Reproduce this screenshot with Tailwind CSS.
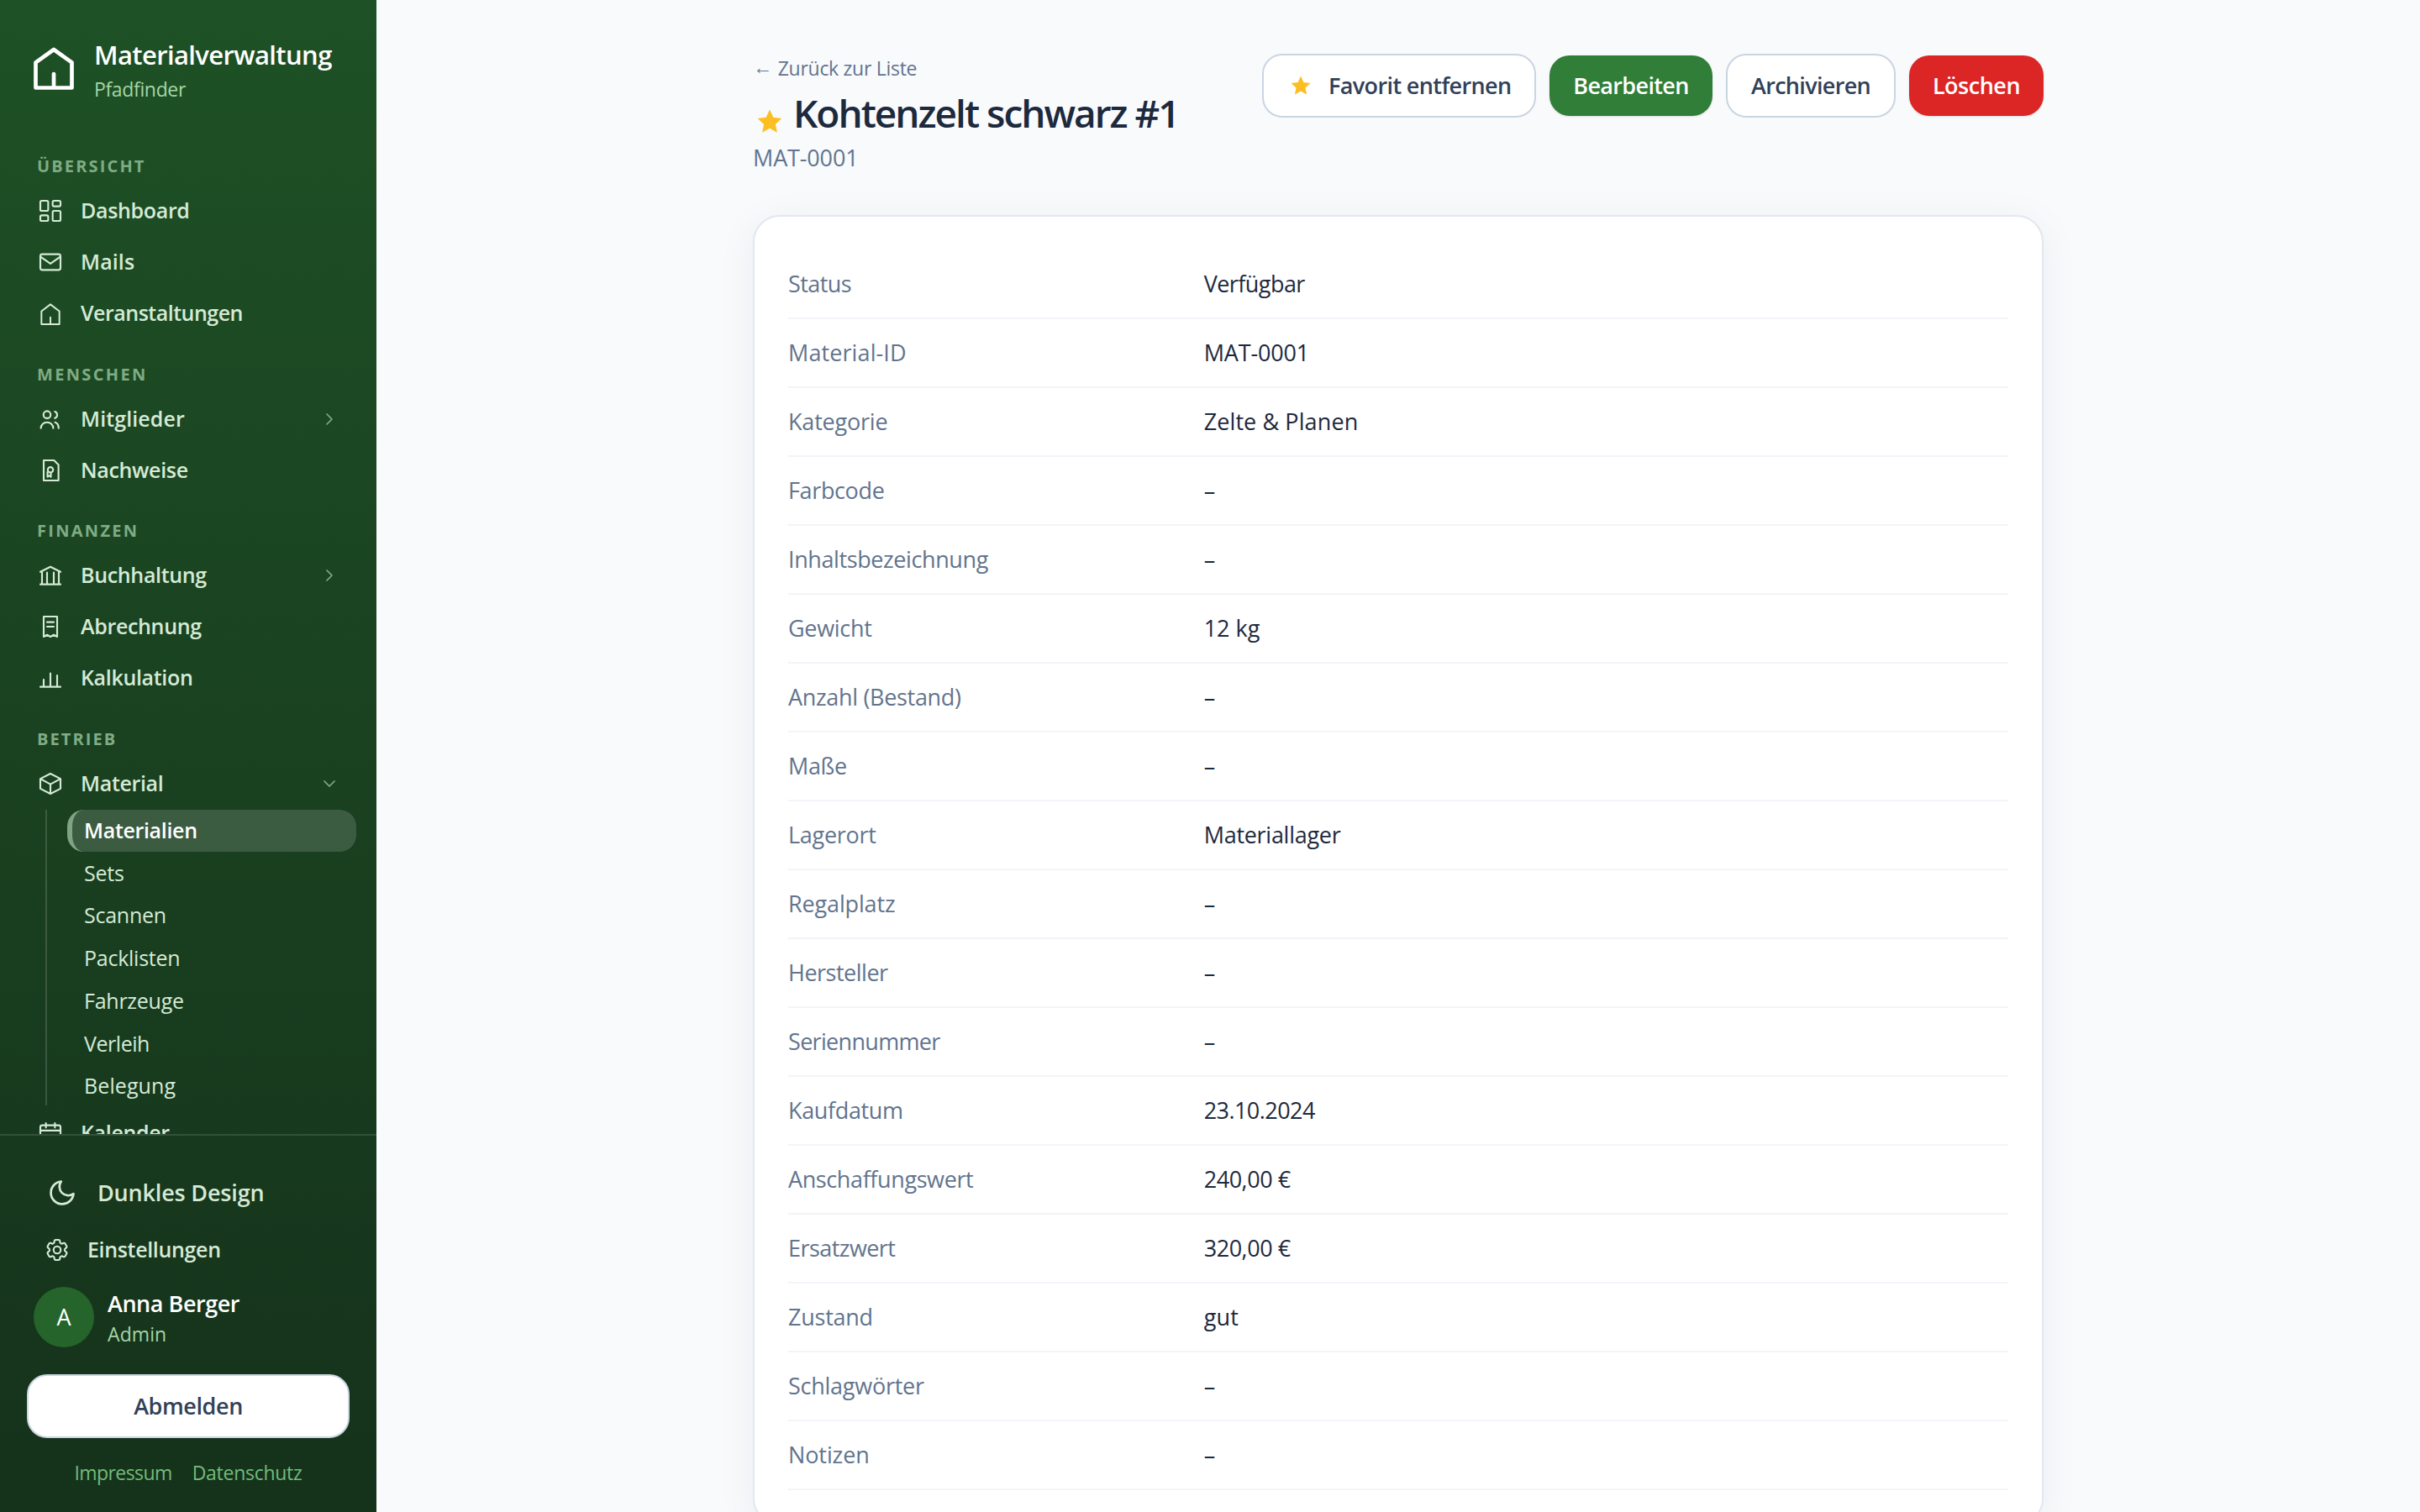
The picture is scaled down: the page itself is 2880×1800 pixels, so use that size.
<!DOCTYPE html>
<html lang="de">
  <head>
    <meta charset="UTF-8" />
    <meta name="viewport" content="width=device-width, initial-scale=1.0" />
    <title>Materialverwaltung - Kohtenzelt schwarz #1</title>
    <script src="https://cdn.jsdelivr.net/npm/@tailwindcss/browser@4"></script>
  </head>
  <body
    class="flex h-[1800px] w-[2880px] overflow-hidden bg-slate-50 font-['Open_Sans','Noto_Sans',sans-serif] text-[27px] text-slate-800"
  >
    <!-- Sidebar -->
    <aside
      class="flex h-full w-[448px] shrink-0 flex-col bg-linear-to-b from-[#1e5125] to-[#15321b] text-[#d5ead6]"
    >
      <!-- Brand -->
      <div class="flex h-[155px] shrink-0 items-start pt-[40px] pl-[36px]">
        <svg class="mt-[12px] size-[56px]" viewBox="0 0 56 56" fill="none" stroke="white" stroke-width="4.7" stroke-linecap="round" stroke-linejoin="round">
          <path d="M6.5 22.3 28 7l21.5 15.3v30.2h-43zM28 36v16.5" />
        </svg>
        <div class="ml-[20px]">
          <div class="text-[31px] leading-[50px] font-semibold tracking-[-0.62px] text-white">Materialverwaltung</div>
          <div class="text-[23px] leading-[32px] tracking-[-0.35px] text-[#a5d6a7]">Pfadfinder</div>
        </div>
      </div>

      <!-- Navigation -->
      <nav class="min-h-0 flex-1 overflow-hidden text-[25px] font-semibold tracking-[-0.33px]">
        <div class="flex h-[65px] items-end pb-[11px] pl-[44px] text-[20px] leading-[22px] font-bold tracking-[2.15px] text-[#7fac85]">ÜBERSICHT</div>
        <a class="flex h-[61px] items-center gap-[20px] pl-[44px]">
          <svg class="size-8" viewBox="0 0 24 24" fill="none" stroke="currentColor" stroke-width="1.6">
            <rect x="3" y="3" width="7" height="9" rx="1.2" />
            <rect x="14" y="3" width="7" height="5" rx="1.2" />
            <rect x="14" y="12" width="7" height="9" rx="1.2" />
            <rect x="3" y="16" width="7" height="5" rx="1.2" />
          </svg>
          Dashboard
        </a>
        <a class="flex h-[61px] items-center gap-[20px] pl-[44px] tracking-[0.1px]">
          <svg class="size-8" viewBox="0 0 24 24" fill="none" stroke="currentColor" stroke-width="1.6" stroke-linejoin="round">
            <rect x="3" y="5" width="18" height="14" rx="1.8" />
            <path d="m3.4 7.4 8.6 6 8.6-6" />
          </svg>
          Mails
        </a>
        <a class="flex h-[61px] items-center gap-[20px] pl-[44px] tracking-[-0.5px]">
          <svg class="size-8" viewBox="0 0 24 24" fill="none" stroke="currentColor" stroke-width="1.5" stroke-linecap="round" stroke-linejoin="round">
            <path d="M4 10.1 12 4l8 6.1v11.6H4zM12 15.5v6.2" />
          </svg>
          Veranstaltungen
        </a>

        <div class="flex h-[65px] items-end pb-[11px] pl-[44px] text-[20px] leading-[22px] font-bold tracking-[2.35px] text-[#7fac85]">MENSCHEN</div>
        <a class="flex h-[61px] items-center gap-[20px] pr-[42px] pl-[44px] tracking-[0.1px]">
          <svg class="size-8" viewBox="0 0 24 24" fill="none" stroke="currentColor" stroke-width="1.6" stroke-linecap="round">
            <circle cx="9" cy="8" r="3.2" />
            <path d="M3.5 20c0-3 2.4-5.2 5.5-5.2s5.5 2.2 5.5 5.2M16 5.3a3.1 3.1 0 0 1 0 5.8M16.2 14.9c1.9.7 3.1 2.7 3.1 5.1" />
          </svg>
          Mitglieder
          <svg class="ml-auto size-[28px] text-[#85a98a]" viewBox="0 0 28 28" fill="none" stroke="currentColor" stroke-width="1.7" stroke-linecap="round" stroke-linejoin="round">
            <path d="m11 8 6 6-6 6" />
          </svg>
        </a>
        <a class="flex h-[61px] items-center gap-[20px] pl-[44px]">
          <svg class="size-8" viewBox="0 0 24 24" fill="none" stroke="currentColor" stroke-width="1.6" stroke-linejoin="round">
            <path d="M6 3h9.2L19.2 7v14H6z" />
            <circle cx="12" cy="11.5" r="2.4" />
            <path d="M9.4 13v4.7l1.5-1 1.5 1v-3.8" />
          </svg>
          Nachweise
        </a>

        <div class="flex h-[64px] items-end pb-[11px] pl-[44px] text-[20px] leading-[22px] font-bold tracking-[2.3px] text-[#7fac85]">FINANZEN</div>
        <a class="flex h-[61px] items-center gap-[20px] pr-[42px] pl-[44px]">
          <svg class="size-8" viewBox="0 0 24 24" fill="none" stroke="currentColor" stroke-width="1.6" stroke-linecap="round" stroke-linejoin="round">
            <path d="M3 8.8 12 4.3l9 4.5M3 20h18M4.5 8.8V20M9 9.5V20M15 9.5V20M19.5 8.8V20" />
          </svg>
          Buchhaltung
          <svg class="ml-auto size-[28px] text-[#85a98a]" viewBox="0 0 28 28" fill="none" stroke="currentColor" stroke-width="1.7" stroke-linecap="round" stroke-linejoin="round">
            <path d="m11 8 6 6-6 6" />
          </svg>
        </a>
        <a class="flex h-[61px] items-center gap-[20px] pl-[44px]">
          <svg class="size-8" viewBox="0 0 24 24" fill="none" stroke="currentColor" stroke-width="1.6" stroke-linecap="round" stroke-linejoin="round">
            <path d="M6 3h12v18l-3-1.7-3 1.7-3-1.7L6 21zM9 8h6M9 12h6" />
          </svg>
          Abrechnung
        </a>
        <a class="flex h-[61px] items-center gap-[20px] pl-[44px]">
          <svg class="size-8" viewBox="0 0 24 24" fill="none" stroke="currentColor" stroke-width="1.6" stroke-linecap="round">
            <path d="M3 20h18M6 20v-6.5M12 20V8M18 20V9.8" />
          </svg>
          Kalkulation
        </a>

        <div class="flex h-[65px] items-end pb-[11px] pl-[44px] text-[20px] leading-[22px] font-bold tracking-[2.1px] text-[#7fac85]">BETRIEB</div>
        <a class="flex h-[61px] items-center gap-[20px] pr-[42px] pl-[44px]">
          <svg class="size-8" viewBox="0 0 24 24" fill="none" stroke="currentColor" stroke-width="1.6" stroke-linejoin="round">
            <path d="m12 3 9 4.6v8.8L12 21l-9-4.6V7.6zM3 7.6l9 4.9 9-4.9M12 12.5V21" />
          </svg>
          Material
          <svg class="ml-auto size-[28px] text-[#85a98a]" viewBox="0 0 28 28" fill="none" stroke="currentColor" stroke-width="1.7" stroke-linecap="round" stroke-linejoin="round">
            <path d="m8 11 6 6 6-6" />
          </svg>
        </a>
        <div class="mt-px mb-[2px] ml-[54px] flex h-[352px] flex-col gap-px border-l-2 border-white/15 pl-6 font-normal tracking-[-0.25px]">
          <a class="flex h-[49.7px] w-[344px] shrink-0 items-center rounded-[20px] border-l-[6px] border-[#7fa384] bg-white/15 pl-[14px] font-semibold tracking-[-0.33px] text-white">Materialien</a>
          <a class="flex h-[49.7px] shrink-0 items-center pl-5">Sets</a>
          <a class="flex h-[49.7px] shrink-0 items-center pl-5">Scannen</a>
          <a class="flex h-[49.7px] shrink-0 items-center pl-5">Packlisten</a>
          <a class="flex h-[49.7px] shrink-0 items-center pl-5">Fahrzeuge</a>
          <a class="flex h-[49.7px] shrink-0 items-center pl-5 tracking-[-0.45px]">Verleih</a>
          <a class="flex h-[49.7px] shrink-0 items-center pl-5 tracking-[0.1px]">Belegung</a>
        </div>
        <a class="flex h-[61px] items-center gap-[20px] pl-[44px]">
          <svg class="size-8" viewBox="0 0 24 24" fill="none" stroke="currentColor" stroke-width="1.6" stroke-linecap="round">
            <rect x="3" y="5" width="18" height="16" rx="1.8" />
            <path d="M3 9.7h18M8 3v4M16 3v4" />
          </svg>
          Kalender
        </a>
      </nav>

      <!-- Sidebar footer -->
      <div class="h-[450px] shrink-0 border-t-2 border-white/12 px-8 font-semibold">
        <a class="mt-[28px] flex h-[80px] items-center gap-[24px] pl-[24px] tracking-[-0.18px]">
          <svg class="size-9" viewBox="0 0 24 24" fill="none" stroke="currentColor" stroke-width="1.8" stroke-linecap="round" stroke-linejoin="round">
            <path d="M21 12.79A9 9 0 1 1 11.21 3 7 7 0 0 0 21 12.79z" />
          </svg>
          Dunkles Design
        </a>
        <a class="flex h-[56px] items-center gap-[20px] pl-[20px] text-[25px] tracking-[-0.34px]">
          <svg class="size-8" viewBox="0 0 24 24" fill="none" stroke="currentColor" stroke-width="1.6" stroke-linecap="round" stroke-linejoin="round">
            <path d="M9.594 3.94c.09-.542.56-.94 1.11-.94h2.593c.55 0 1.02.398 1.11.94l.213 1.281c.063.374.313.686.645.87.074.04.147.083.22.127.325.196.72.257 1.075.124l1.217-.456a1.125 1.125 0 0 1 1.37.49l1.296 2.247a1.125 1.125 0 0 1-.26 1.431l-1.003.827c-.293.241-.438.613-.43.992a7.723 7.723 0 0 1 0 .255c-.008.378.137.75.43.991l1.004.827c.424.35.534.955.26 1.43l-1.298 2.247a1.125 1.125 0 0 1-1.369.491l-1.217-.456c-.355-.133-.75-.072-1.076.124a6.47 6.47 0 0 1-.22.128c-.331.183-.581.495-.644.869l-.213 1.281c-.09.543-.56.94-1.11.94h-2.594c-.55 0-1.019-.398-1.11-.94l-.213-1.281c-.062-.374-.312-.686-.644-.87a6.52 6.52 0 0 1-.22-.127c-.325-.196-.72-.257-1.076-.124l-1.217.456a1.125 1.125 0 0 1-1.369-.49l-1.297-2.247a1.125 1.125 0 0 1 .26-1.431l1.004-.827c.292-.24.437-.613.43-.991a6.932 6.932 0 0 1 0-.255c.007-.38-.138-.751-.43-.992l-1.004-.827a1.125 1.125 0 0 1-.26-1.43l1.297-2.247a1.125 1.125 0 0 1 1.37-.491l1.216.456c.356.133.751.072 1.076-.124.072-.044.146-.086.22-.128.332-.183.582-.495.644-.869l.214-1.28Z" />
            <circle cx="12" cy="12" r="3.2" />
          </svg>
          Einstellungen
        </a>
        <div class="mt-[16px] flex h-[72px] items-center gap-4 pl-2">
          <div class="flex size-[72px] items-center justify-center rounded-full bg-[#25642a] font-normal text-white">A</div>
          <div>
            <div class="text-[27px] leading-[40px] tracking-[-0.45px] text-white">Anna Berger</div>
            <div class="text-[23px] leading-[32px] font-normal tracking-[0.1px] text-[#a5d6a7]">Admin</div>
          </div>
        </div>
        <button class="mt-8 flex h-[76px] w-full items-center justify-center rounded-3xl border-2 border-slate-300 bg-white tracking-[-0.41px] text-slate-700">Abmelden</button>
        <div class="mt-[25px] flex justify-center gap-[24px] text-[23px] leading-[32px] font-normal text-[#73bb7b]">
          <a class="tracking-[-0.58px]">Impressum</a>
          <a class="tracking-[-0.27px]">Datenschutz</a>
        </div>
      </div>
    </aside>

    <!-- Content -->
    <main class="flex-1">
      <div class="mx-auto w-[1536px] pt-16">
        <header class="flex h-[192px] items-start justify-between">
          <div>
            <a class="flex h-[34px] items-center gap-[7px] text-[23px] tracking-[-0.28px] text-slate-500"><span class="-mt-1">←</span>Zurück zur Liste</a>
            <h1 class="mt-[2px] flex h-[68px] items-center text-[46px] leading-[68px] font-semibold tracking-[-2px]">
              <svg class="mt-[21px] mr-[8px] size-10" viewBox="0 0 40 40" fill="#fbbf24">
                <path d="m20 5.500 4.300 9.300 10 1.200-7.400 6.900 2 9.900-8.900-5-8.900 5 2-9.900-7.400-6.900 10-1.200z" />
              </svg>
              Kohtenzelt schwarz #1
            </h1>
            <p class="h-[39px] leading-[39px] tracking-[-0.15px] text-slate-500">MAT-0001</p>
          </div>
          <div class="flex items-center gap-4 font-semibold">
            <button class="flex h-[76px] w-[326px] items-center rounded-3xl border-2 border-slate-300 bg-white pl-[28px] tracking-[-0.62px] text-slate-700">
              <svg class="mr-[17px] size-8" viewBox="0 0 32 32" fill="#fbbf24">
                <path d="m16 4.500 3.400 7.500 8.100 1-6 5.600 1.600 8-7.100-4-7.100 4 1.600-8-6-5.600 8.100-1z" />
              </svg>
              Favorit entfernen
            </button>
            <button class="h-[72px] w-[194px] rounded-3xl bg-[#307e37] tracking-[-0.64px] text-white shadow-sm">Bearbeiten</button>
            <button class="h-[76px] w-[202px] rounded-3xl border-2 border-slate-300 bg-white tracking-[-0.68px] text-slate-700">Archivieren</button>
            <button class="h-[72px] w-[160px] rounded-3xl bg-[#dc2626] tracking-[-0.49px] text-white shadow-sm">Löschen</button>
          </div>
        </header>

        <!-- Details -->
        <section class="rounded-[32px] border-2 border-slate-200 bg-white px-12 py-10 shadow-[0_8px_48px_rgba(30,41,59,0.06)]">
          <dl id="details" class="-mx-2"></dl>
        </section>
      </div>
    </main>

    <script>
      // label, value, label tracking, value tracking
      const details = [
        ["Status", "Verfügbar", "tracking-[-0.58px]", "tracking-[-0.55px]"],
        ["Material-ID", "MAT-0001", "tracking-[0.1px]", "tracking-[-0.15px]"],
        ["Kategorie", "Zelte &amp; Planen", "tracking-[-0.2px]", "tracking-[0.1px]"],
        ["Farbcode", "–", "tracking-[-0.36px]", ""],
        ["Inhaltsbezeichnung", "–", "tracking-[-0.4px]", ""],
        ["Gewicht", "12 kg", "tracking-[-0.29px]", ""],
        ["Anzahl (Bestand)", "–", "tracking-[-0.32px]", ""],
        ["Maße", "–", "tracking-[-0.37px]", ""],
        ["Lagerort", "Materiallager", "tracking-[-0.28px]", "tracking-[-0.28px]"],
        ["Regalplatz", "–", "tracking-[-0.15px]", ""],
        ["Hersteller", "–", "tracking-[-0.5px]", ""],
        ["Seriennummer", "–", "tracking-[-0.68px]", ""],
        ["Kaufdatum", "23.10.2024", "tracking-[-0.36px]", "tracking-[-0.55px]"],
        ["Anschaffungswert", "240,00 €", "tracking-[-0.39px]", "tracking-[-0.45px]"],
        ["Ersatzwert", "320,00 €", "tracking-[-0.55px]", "tracking-[-0.45px]"],
        ["Zustand", "gut", "tracking-[-0.25px]", "tracking-[0.2px]"],
        ["Schlagwörter", "–", "tracking-[-0.25px]", ""],
        ["Notizen", "–", "tracking-[-0.1px]", ""],
      ];

      document.getElementById("details").innerHTML = details
        .map(
          ([label, value, labelClass, valueClass]) => `
            <div class="grid h-[82px] grid-cols-3 items-center gap-8 border-b-2 border-slate-100">
              <dt class="text-slate-500 ${labelClass}">${label}</dt>
              <dd class="col-span-2 ${valueClass}">${value}</dd>
            </div>`
        )
        .join("");
    </script>
  </body>
</html>
